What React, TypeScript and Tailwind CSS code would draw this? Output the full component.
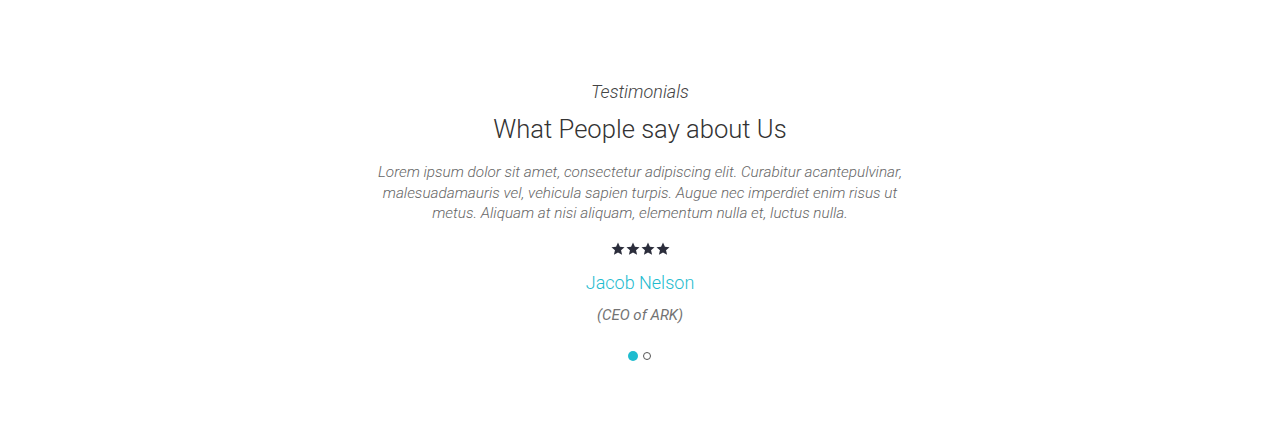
export default function App() {
  const star = (
    <svg width="14" height="14" viewBox="0 0 24 24" fill="#2b2d3b">
      <path d="M12 1l3.3 7.2 7.9.7-6 5.3 1.8 7.8L12 17.9l-7 4.1 1.8-7.8-6-5.3 7.9-.7z" />
    </svg>
  );
  return (
    <div className="w-[1280px] h-[426px] bg-white flex flex-col items-center pt-[81px]" style={{ fontFamily: "Roboto, 'Liberation Sans', sans-serif" }}>
      <p className="text-[18px] leading-[22px] italic font-light text-[#444]">Testimonials</p>
      <h2 className="mt-[11px] text-[25.6px] leading-[30px] font-light text-[#333]">What People say about Us</h2>
      <p className="mt-[18px] w-[540px] text-center text-[15.3px] leading-[20.7px] italic font-light text-[#666]">
        Lorem ipsum dolor sit amet, consectetur adipiscing elit. Curabitur acantepulvinar, malesuadamauris vel, vehicula sapien turpis. Augue nec imperdiet enim risus ut metus. Aliquam at nisi aliquam, elementum nulla et, luctus nulla.
      </p>
      <div className="mt-[18px] flex gap-[1px]">{star}{star}{star}{star}</div>
      <p className="mt-[16px] text-[18px] leading-[22px] font-light text-[#1fbccf]">Jacob Nelson</p>
      <p className="mt-[11px] text-[15px] leading-[20px] italic text-[#737373]">(CEO of ARK)</p>
      <div className="mt-[26px] flex items-center gap-[5px] -translate-x-[1px]">
        <span className="w-[10px] h-[10px] rounded-full bg-[#1fbccf]" />
        <span className="w-[8px] h-[8px] rounded-full border border-[#555]" />
      </div>
    </div>
  );
}
